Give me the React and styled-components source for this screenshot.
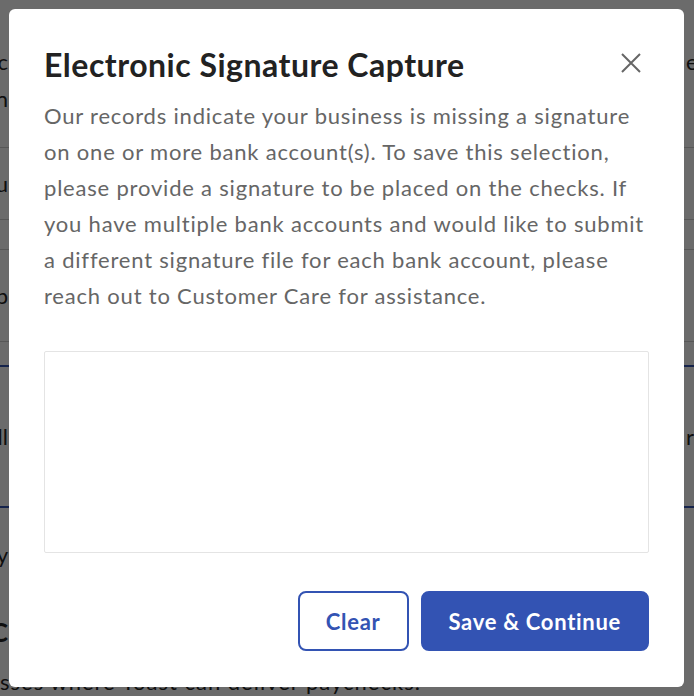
import React from 'react';
import styled, { createGlobalStyle } from 'styled-components';

const Global = createGlobalStyle`
  html, body {
    margin: 0;
    padding: 0;
    overflow: hidden;
    background: #fff;
  }
  body {
    font-family: Lato, "Open Sans", sans-serif;
    color: #252525;
  }
`;

const Page = styled.div`
  display: grid;
  grid-template-columns: 8px 678px 1fr;
  padding-top: 40px;
  font-size: 22px;
`;

const Row = styled.div`
  grid-column: 1 / -1;
  display: grid;
  grid-template-columns: subgrid;
  align-items: center;
  height: ${(p) => p.h}px;
  border-bottom: ${(p) =>
    p.line === 'blue' ? '2px solid #3353b3' : p.line === 'gray' ? '1px solid #cfcfcf' : 'none'};
  box-sizing: border-box;
`;

const Label = styled.div`
  direction: rtl;
  white-space: nowrap;
  font-weight: ${(p) => (p.bold ? 700 : 400)};
  font-size: ${(p) => (p.bold ? 26 : 22)}px;
`;

const Side = styled.div`
  grid-column: 3;
  white-space: nowrap;
`;

const Footnote = styled.div`
  grid-column: 1 / -1;
  padding-top: 4px;
  white-space: nowrap;
  line-height: 28px;
  letter-spacing: 1px;
`;

const Backdrop = styled.div`
  position: fixed;
  inset: 0;
  background: rgba(0, 0, 0, 0.58);
`;

const Modal = styled.div`
  position: fixed;
  left: 9px;
  top: 9px;
  width: 675px;
  height: 678px;
  box-sizing: border-box;
  background: #fff;
  border-radius: 6px;
  padding: 36px 35px;
  display: flex;
  flex-direction: column;
`;

const Header = styled.div`
  display: flex;
  justify-content: space-between;
  align-items: flex-start;
`;

const Title = styled.h2`
  margin: 0;
  font-size: 32px;
  line-height: 40px;
  font-weight: 700;
  letter-spacing: 0.5px;
  color: #222;
`;

const CloseButton = styled.button`
  border: none;
  background: none;
  padding: 0;
  margin: 8px 8px 0 0;
  width: 20px;
  height: 20px;
  cursor: pointer;
  display: flex;
  align-items: center;
  justify-content: center;
`;

const Body = styled.p`
  margin: 13px 0 0;
  font-size: 22px;
  line-height: 36px;
  letter-spacing: 0.8px;
  color: #666;
`;

const SignaturePad = styled.div`
  margin-top: 37px;
  height: 202px;
  border: 1px solid #e4e4e4;
  border-radius: 2px;
  box-sizing: border-box;
`;

const Actions = styled.div`
  margin-top: auto;
  display: flex;
  justify-content: flex-end;
  gap: 12px;
`;

const Button = styled.button`
  height: 60px;
  box-sizing: border-box;
  padding: 0 26px;
  border-radius: 8px;
  border: 2px solid #3353b3;
  font-family: inherit;
  font-size: 22px;
  font-weight: 700;
  letter-spacing: 0.7px;
  cursor: pointer;
  background: ${(p) => (p.primary ? '#3353b3' : '#fff')};
  color: ${(p) => (p.primary ? '#fff' : '#3353b3')};
`;

export default function App() {
  return (
    <>
      <Global />
      <Page>
        <Row h={42}>
          <Label>c</Label>
          <Side>e</Side>
        </Row>
        <Row h={33}>
          <Label>n</Label>
        </Row>
        <Row h={33} line="gray" />
        <Row h={72} line="gray">
          <Label>u</Label>
        </Row>
        <Row h={30} line="gray" />
        <Row h={92} line="gray">
          <Label>p</Label>
        </Row>
        <Row h={25} line="blue" />
        <Row h={141} line="blue">
          <Label>ll</Label>
          <Side>r</Side>
        </Row>
        <Row h={92}>
          <Label>y</Label>
        </Row>
        <Row h={64}>
          <Label bold>C</Label>
        </Row>
        <Footnote>sses where Toast can deliver paychecks.</Footnote>
      </Page>
      <Backdrop />
      <Modal role="dialog" aria-labelledby="sig-title">
        <Header>
          <Title id="sig-title">Electronic Signature Capture</Title>
          <CloseButton aria-label="Close">
            <svg width="20" height="20" viewBox="0 0 20 20">
              <path d="M1 1 L19 19 M19 1 L1 19" stroke="#666" strokeWidth="2" fill="none" />
            </svg>
          </CloseButton>
        </Header>
        <Body>
          Our records indicate your business is missing a signature on one or more bank
          account(s). To save this selection, please provide a signature to be placed on the
          checks. If you have multiple bank accounts and would like to submit a different
          signature file for each bank account, please reach out to Customer Care for
          assistance.
        </Body>
        <SignaturePad />
        <Actions>
          <Button>Clear</Button>
          <Button primary>Save &amp; Continue</Button>
        </Actions>
      </Modal>
    </>
  );
}
